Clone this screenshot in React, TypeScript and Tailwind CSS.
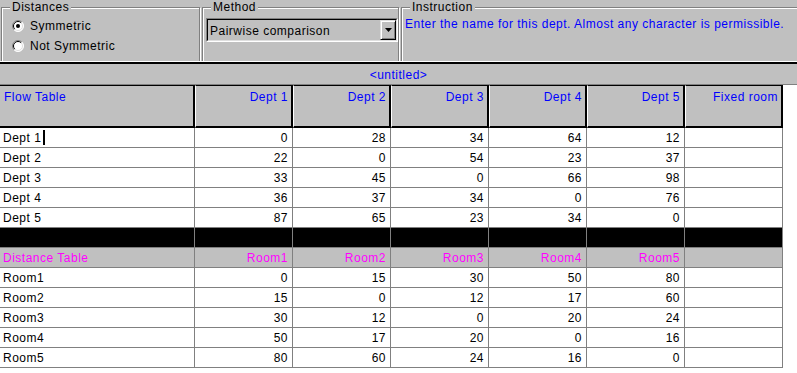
import React from "react";

const flow = [
  ["Dept 1", 0, 28, 34, 64, 12],
  ["Dept 2", 22, 0, 54, 23, 37],
  ["Dept 3", 33, 45, 0, 66, 98],
  ["Dept 4", 36, 37, 34, 0, 76],
  ["Dept 5", 87, 65, 23, 34, 0],
];
const dist = [
  ["Room1", 0, 15, 30, 50, 80],
  ["Room2", 15, 0, 12, 17, 60],
  ["Room3", 30, 12, 0, 20, 24],
  ["Room4", 50, 17, 20, 0, 16],
  ["Room5", 80, 60, 24, 16, 0],
];

function GroupBox({ title, className, children }: { title: string; className: string; children?: React.ReactNode }) {
  return (
    <div
      className={`relative mt-[7px] h-[70px] shrink-0 border border-[#808080] shadow-[1px_1px_0_#fff,inset_1px_1px_0_#fff] ${className}`}
    >
      <span className="absolute left-[8px] -top-[8px] bg-[#c0c0c0] px-[2px] leading-[14px] text-black">{title}</span>
      {children}
    </div>
  );
}

function Radio({ checked }: { checked?: boolean }) {
  return (
    <svg width="12" height="12" viewBox="0 0 12 12" className="shrink-0">
      <circle cx="6" cy="6" r="5.5" fill="#fff" />
      <path d="M9.9 2.1 A5.5 5.5 0 0 0 2.1 9.9" stroke="#808080" strokeWidth="1" fill="none" />
      <path d="M2.1 9.9 A5.5 5.5 0 0 0 9.9 2.1" stroke="#ffffff" strokeWidth="1" fill="none" />
      <path d="M9.2 2.8 A4.5 4.5 0 0 0 2.8 9.2" stroke="#000" strokeWidth="1" fill="none" />
      <path d="M2.8 9.2 A4.5 4.5 0 0 0 9.2 2.8" stroke="#dfdfdf" strokeWidth="1" fill="none" />
      {checked && <circle cx="6" cy="6" r="2" fill="#000" />}
    </svg>
  );
}

const cols = "grid grid-cols-[195px_repeat(6,98px)_1fr]";

export default function App() {
  return (
    <div className="w-[797px] h-[373px] overflow-hidden bg-white text-[12px] tracking-[0.5px] font-['Liberation_Sans',Arial,sans-serif] text-black">
      {/* top panel */}
      <div className="h-[61px] overflow-hidden bg-[#c0c0c0] flex gap-[2px] pl-[1px]">
        <GroupBox title="Distances" className="w-[199px]">
          <div className="pt-[12px] pl-[10px] flex flex-col gap-[8px]">
            <div className="flex items-center h-[12px] gap-[6px]">
              <Radio checked />
              <span className="leading-[14px]">Symmetric</span>
            </div>
            <div className="flex items-center h-[12px] gap-[6px]">
              <Radio />
              <span className="leading-[14px]">Not Symmetric</span>
            </div>
          </div>
        </GroupBox>
        <GroupBox title="Method" className="w-[197px]">
          <div className="ml-[3px] mt-[10px] w-[192px] h-[24px] border border-t-[#808080] border-l-[#808080] border-b-white border-r-white">
            <div className="h-full flex items-center border border-t-black border-l-black border-b-[#dfdfdf] border-r-[#dfdfdf] bg-[#c0c0c0]">
              <span className="flex-1 pl-[2px] leading-[14px] pt-[1px]">Pairwise comparison</span>
              <div className="w-[16px] h-full flex items-center justify-center border border-t-[#dfdfdf] border-l-[#dfdfdf] border-b-black border-r-black shadow-[inset_1px_1px_0_#fff,inset_-1px_-1px_0_#808080]">
                <svg width="7" height="4" viewBox="0 0 7 4">
                  <path d="M0 0 H7 L3.5 4 Z" fill="#000" />
                </svg>
              </div>
            </div>
          </div>
        </GroupBox>
        <GroupBox title="Instruction" className="w-[400px]">
          <div className="pl-[3px] pt-[9px] leading-[14px] text-[#0000ff]">
            Enter the name for this dept. Almost any character is permissible.
          </div>
        </GroupBox>
      </div>
      <div className="h-px bg-white" />
      <div className="h-[2px] bg-black" />
      {/* title bar */}
      <div className="h-[21px] bg-[#c0c0c0] border-b border-[#808080] flex items-center justify-center pt-[1px]">
        <span className="text-[#0000ff] leading-[14px]">&lt;untitled&gt;</span>
      </div>

      {/* Flow table header */}
      <div className={cols}>
        <div className="h-[43px] bg-[#c0c0c0] border-t border-t-black border-b-2 border-b-black border-r-2 border-r-black pl-[4px] pt-[4px] leading-[14px] text-[#0000ff]">
          Flow Table
        </div>
        {["Dept 1", "Dept 2", "Dept 3", "Dept 4", "Dept 5", "Fixed room"].map((h) => (
          <div
            key={h}
            className="h-[43px] bg-[#c0c0c0] border-t border-t-black border-b-2 border-b-black border-r-2 border-r-black border-l border-l-white pr-[3px] pt-[4px] leading-[14px] text-right text-[#0000ff]"
          >
            {h}
          </div>
        ))}
        <div className="h-[43px] bg-white" />

        {flow.map((r, i) => (
          <React.Fragment key={i}>
            <div className="h-[20px] border-b border-r border-[#808080] pl-[3px] flex items-center leading-[14px]">
              {r[0]}
              {i === 0 && <span className="inline-block ml-[2px] w-[2px] h-[15px] bg-black" />}
            </div>
            {r.slice(1).map((v, j) => (
              <div key={j} className="h-[20px] border-b border-r border-[#808080] pr-[4px] flex items-center justify-end leading-[14px]">
                {v}
              </div>
            ))}
            <div className="h-[20px] border-b border-r border-[#808080]" />
            <div className="h-[20px]" />
          </React.Fragment>
        ))}

        {/* black separator row */}
        {Array.from({ length: 7 }).map((_, j) => (
          <div key={j} className="h-[20px] bg-black border-b border-r border-[#808080]" />
        ))}
        <div className="h-[20px]" />

        {/* distance header */}
        <div className="h-[20px] bg-[#c0c0c0] border-b border-r border-[#808080] pl-[3px] flex items-center leading-[14px] text-[#ff00ff]">
          Distance Table
        </div>
        {["Room1", "Room2", "Room3", "Room4", "Room5"].map((h) => (
          <div key={h} className="h-[20px] bg-[#c0c0c0] border-b border-r border-[#808080] pr-[4px] flex items-center justify-end leading-[14px] text-[#ff00ff]">
            {h}
          </div>
        ))}
        <div className="h-[20px] bg-[#c0c0c0] border-b border-r border-[#808080]" />
        <div className="h-[20px]" />

        {dist.map((r, i) => (
          <React.Fragment key={i}>
            <div className="h-[20px] border-b border-r border-[#808080] pl-[3px] flex items-center leading-[14px]">
              {r[0]}
            </div>
            {r.slice(1).map((v, j) => (
              <div key={j} className="h-[20px] border-b border-r border-[#808080] pr-[4px] flex items-center justify-end leading-[14px]">
                {v}
              </div>
            ))}
            <div className="h-[20px] border-b border-r border-[#808080]" />
            <div className="h-[20px]" />
          </React.Fragment>
        ))}
      </div>
    </div>
  );
}
